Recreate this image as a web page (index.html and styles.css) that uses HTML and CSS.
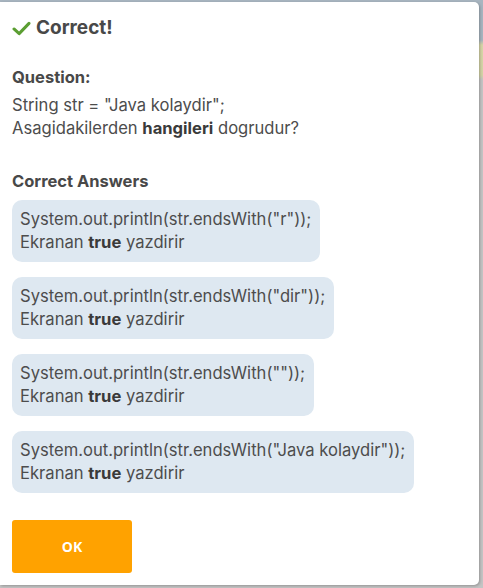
FILE: index.html
```html
<!DOCTYPE html>
<html>
<head>
<meta charset="utf-8">
<link rel="stylesheet" href="styles.css">
</head>
<body>
<div class="page">
  <div class="card">
    <h1 class="title">
      <svg class="check" viewBox="0 0 20 16" width="19" height="15"><path d="M2 8.5 L7.5 13.5 L18 2.5" fill="none" stroke="#5b9e32" stroke-width="3.2" stroke-linecap="round" stroke-linejoin="round"/></svg>
      Correct!
    </h1>
    <h2 class="label">Question:</h2>
    <p class="question">String str = "Java kolaydir";<br>Asagidakilerden <b>hangileri</b> dogrudur?</p>
    <h2 class="label answers-label">Correct Answers</h2>
    <div class="answers">
      <div class="answer">System.out.println(str.endsWith("r"));<br>Ekranan <b>true</b> yazdirir</div>
      <div class="answer">System.out.println(str.endsWith("dir"));<br>Ekranan <b>true</b> yazdirir</div>
      <div class="answer">System.out.println(str.endsWith(""));<br>Ekranan <b>true</b> yazdirir</div>
      <div class="answer">System.out.println(str.endsWith("Java kolaydir"));<br>Ekranan <b>true</b> yazdirir</div>
    </div>
    <button class="ok">OK</button>
  </div>
</div>
</body>
</html>
```
FILE: styles.css
```css
html, body {
  margin: 0;
  padding: 0;
}
body {
  width: 483px;
  height: 588px;
  overflow: hidden;
  background: linear-gradient(to bottom, #a8b5c0 0px, #a8b5c0 40px, #d8d6a8 45px, #d4d3a6 75px, #c4c4c4 80px, #c4c4c4 100%);
  font-family: Inter, "Noto Sans", sans-serif;
  color: #4d4d4d;
}
.page {
  padding: 2px 3px 3px 0;
}
.card {
  width: 479px;
  height: 583px;
  box-sizing: border-box;
  background: #fff;
  border-radius: 0 5px 5px 0;
  box-shadow: 1px 1px 3px rgba(0,0,0,0.25);
  padding: 14px 12px 12px 12px;
}
.title {
  display: flex;
  align-items: center;
  gap: 5px;
  margin: 0;
  font-size: 19px;
  font-weight: 700;
  line-height: 24px;
  color: #484848;
}
.check {
  display: block;
}
.label {
  margin: 27px 0 0 0;
  font-size: 16.5px;
  font-weight: 700;
  line-height: 20px;
  color: #484848;
}
.answers-label {
  margin-top: 31px;
}
.question {
  margin: 7px 0 0 0;
  font-size: 16.6px;
  line-height: 23px;
}
.question b, .answer b {
  font-weight: 700;
  color: #3a3a3a;
}
.answers {
  display: flex;
  flex-direction: column;
  align-items: flex-start;
  gap: 15px;
  margin-top: 9px;
}
.answer {
  background: #dee8f1;
  border-radius: 10px;
  padding: 8px 9px 8px 8px;
  font-size: 16.6px;
  line-height: 23px;
}
.ok {
  display: block;
  margin-top: 27px;
  width: 120px;
  height: 53px;
  border: none;
  border-radius: 3px;
  background: #ffa200;
  color: #fff;
  font-family: "Open Sans", sans-serif;
  font-weight: 700;
  font-size: 14px;
}
```
